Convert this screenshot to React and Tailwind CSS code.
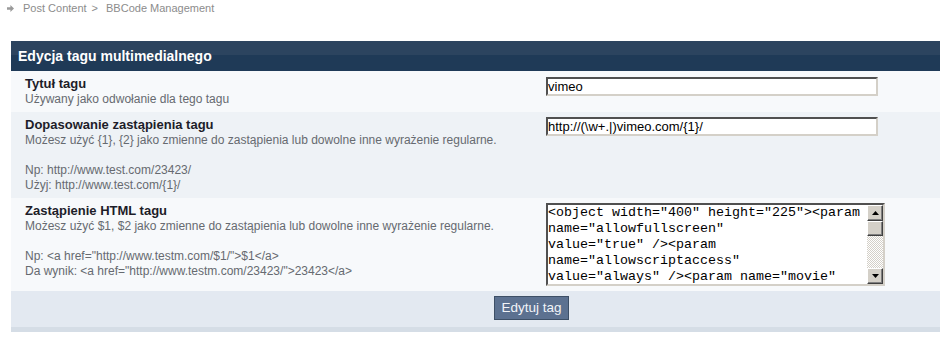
import React from "react";

const codeLines = [
  '<object width="400" height="225"><param',
  'name="allowfullscreen"',
  'value="true" /><param',
  'name="allowscriptaccess"',
  'value="always" /><param name="movie"',
];

// strzałka w okruszkach
const CrumbArrow = () => (
  <svg width="7" height="7" viewBox="0 0 7 7" className="mt-px">
    <path d="M0 2.2h3.4V0L7 3.5 3.4 7V4.8H0z" fill="#9a9a9a" />
  </svg>
);

const Arrow = ({ up }) => (
  <svg width="7" height="4" viewBox="0 0 7 4">
    <path d={up ? "M0 4L3.5 0 7 4z" : "M0 0h7L3.5 4z"} fill="#000" />
  </svg>
);

const ScrollBtn = ({ up }) => (
  <div className="h-[16px] flex items-center justify-center bg-[#d4d0c8] border border-t-white border-l-white border-r-[#404040] border-b-[#404040] shadow-[inset_-1px_-1px_#808080]">
    <Arrow up={up} />
  </div>
);

function Row({ title, lines, bg, children, first }) {
  return (
    <div className={`grid grid-cols-[535px_1fr] ${bg}`}>
      <div className="pl-[14px] py-[5px]">
        <div className="text-[13px] font-bold leading-[16px] text-[#1d1d29]">{title}</div>
        {lines.map((l, i) =>
          l ? (
            <div key={i} className="text-[12px] leading-[15px] text-[#666a70]">{l}</div>
          ) : (
            <div key={i} className="h-[15px]" />
          )
        )}
      </div>
      <div className={first ? "pt-[6px] pb-[5px]" : "py-[5px]"}>{children}</div>
    </div>
  );
}

const inputCls =
  "block w-[332px] h-[19px] bg-white border-2 border-t-[#505050] border-l-[#505050] border-b-[#d4d0c8] border-r-[#d4d0c8] text-[13px] leading-[15px] text-black font-['Liberation_Sans',Arial,sans-serif] outline-none px-0";

export default function App() {
  return (
    <div className="w-[940px] h-[354px] overflow-hidden bg-white font-['Liberation_Sans',Arial,sans-serif]">
      <div className="h-[16px] flex items-center pl-[7px] text-[11px] text-[#8c8c8c]">
        <CrumbArrow />
        <span className="ml-[9px]">Post Content</span>
        <span className="mx-[5px]">&gt;</span>
        <span className="ml-[3px]">BBCode Management</span>
      </div>

      <div className="ml-[11px] mt-[25px] w-[1041px]">
        <div className="h-[30px] flex items-center pl-[7px] text-white font-bold text-[14px] bg-[linear-gradient(to_bottom,#2c445f_0,#2c445f_14px,#1f3a57_14px,#1f3a57_100%)]">
          Edycja tagu multimedialnego
        </div>

        <Row first title="Tytuł tagu" lines={["Używany jako odwołanie dla tego tagu"]} bg="bg-[#f7f9fb]">
          <input className={inputCls} defaultValue="vimeo" />
        </Row>

        <Row
          title="Dopasowanie zastąpienia tagu"
          lines={[
            "Możesz użyć {1}, {2} jako zmienne do zastąpienia lub dowolne inne wyrażenie regularne.",
            "",
            "Np: http://www.test.com/23423/",
            "Użyj: http://www.test.com/{1}/",
          ]}
          bg="bg-[#eef2f6]"
        >
          <input className={inputCls} defaultValue="http://(\w+.|)vimeo.com/{1}/" />
        </Row>

        <Row
          title="Zastąpienie HTML tagu"
          lines={[
            "Możesz użyć $1, $2 jako zmienne do zastąpienia lub dowolne inne wyrażenie regularne.",
            "",
            'Np: <a href="http://www.testm.com/$1/">$1</a>',
            'Da wynik: <a href="http://www.testm.com/23423/">23423</a>',
          ]}
          bg="bg-[#f7f9fb]"
        >
          <div className="w-[339px] h-[83px] flex bg-white border-2 border-t-[#505050] border-l-[#505050] border-b-[#d4d0c8] border-r-[#d4d0c8]">
            <div className="flex-1 overflow-hidden font-['Liberation_Mono','Courier_New',monospace] text-[13.33px] leading-[16px] text-black">
              {codeLines.map((l, i) => (
                <div key={i} className="whitespace-pre">{l}</div>
              ))}
            </div>
            <div className="w-[16px] flex flex-col">
              <ScrollBtn up />
              <div className="h-[15px] bg-[#d4d0c8] border border-t-white border-l-white border-r-[#404040] border-b-[#404040] shadow-[inset_-1px_-1px_#808080]" />
              <div className="flex-1 bg-[repeating-conic-gradient(#d4d0c8_0%_25%,#ffffff_0%_50%)] bg-[length:2px_2px]" />
              <ScrollBtn />
            </div>
          </div>
        </Row>

        <div className="h-[36px] pt-[5px] flex justify-center items-start bg-[#e3e9f1]">
          <button
            type="button"
            className="w-[75px] h-[24px] bg-[#5c7190] border border-[#3d4f66] text-[#f2f4f8] text-[13.5px] leading-none"
          >
            Edytuj tag
          </button>
        </div>
        <div className="h-[5px] bg-[#d5dde6]" />
      </div>
    </div>
  );
}
